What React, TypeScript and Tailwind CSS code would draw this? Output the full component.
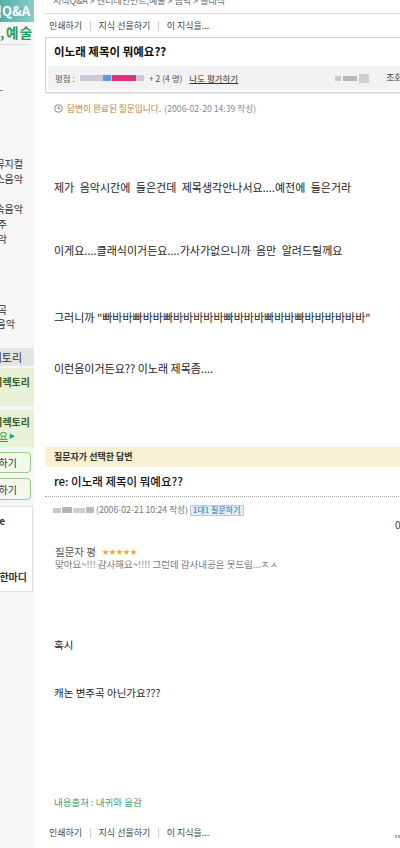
const Clock = () => (
  <svg width="9" height="9" viewBox="0 0 10 10" className="shrink-0">
    <circle cx="5" cy="5" r="4.2" fill="none" stroke="#8a7a6a" strokeWidth="1" />
    <path d="M5 2.4V5.2H7.2" fill="none" stroke="#8a7a6a" strokeWidth="1" />
  </svg>
);

function SideItem({ text, pr, cls = "" }: { text: string; pr: string; cls?: string }) {
  return (
    <div className={`h-[15px] leading-[15px] flex justify-end overflow-hidden whitespace-nowrap text-[10px] text-[#333] ${pr} ${cls}`}>
      {text}
    </div>
  );
}

function PrintLinks() {
  return (
    <>
      인쇄하기 <span className="mx-[7px] text-[#aaa]">|</span> 지식 선물하기 <span className="mx-[7px] text-[#aaa]">|</span> 이 지식을...
    </>
  );
}

export default function App() {
  return (
    <div className="w-[400px] h-[848px] overflow-hidden flex bg-white text-[#222] font-['Noto_Sans_CJK_KR',sans-serif]">
      {/* Sidebar */}
      <div className="w-[34px] shrink-0 h-full bg-[#f6f6f6] flex flex-col">
        <div className="h-[22px] bg-gradient-to-r from-[#55aea9] to-[#8ccbc6] flex items-center justify-end overflow-hidden whitespace-nowrap text-white text-[13px] font-bold pr-[4px]">
          지식Q&amp;A
        </div>
        <div className="h-[20px] flex items-center overflow-visible whitespace-nowrap text-[13.5px] font-bold text-[#279a57] tracking-[1.5px]">
          ,예술
        </div>
        <div className="mt-[2px] mr-[6px] border-t border-[#dcdcdc]" />
        <div className="mt-[36px] h-[15px] leading-[15px] flex justify-end overflow-hidden whitespace-nowrap text-[10px] text-[#444] pr-[31px]">
          -
        </div>
        <div className="mt-[60px]">
          <SideItem text="뮤지컬" pr="pr-[11px]" />
          <SideItem text="재즈,블루스음악" pr="pr-[11px]" />
        </div>
        <div className="mt-[15px]">
          <SideItem text="전통,민속음악" pr="pr-[11px]" />
          <SideItem text="악기연주" pr="pr-[27px]" />
          <SideItem text="국악" pr="pr-[27px]" />
        </div>
        <div className="mt-[57px]">
          <SideItem text="편곡,작곡" pr="pr-[27px]" cls="!h-[14px] !leading-[14px]" />
          <SideItem text="기타음악" pr="pr-[19px]" cls="!h-[14px] !leading-[14px]" />
        </div>
        <div className="mt-[17px] h-[18px] bg-[#e3e3e3] flex items-center justify-end overflow-hidden whitespace-nowrap text-[11px] text-[#333] pr-[12px]">
          디렉토리
        </div>
        <div className="mt-[2px] h-[38px] bg-[#e6f1d6] pt-[7px]">
          <div className="h-[14px] leading-[14px] flex justify-end overflow-hidden whitespace-nowrap text-[10px] font-bold text-[#3b5a22] pr-[4px]">
            오픈디렉토리
          </div>
        </div>
        <div className="mt-[4px] h-[37px] bg-[#e6f1d6] pt-[5px]">
          <div className="h-[14px] leading-[14px] flex justify-end overflow-hidden whitespace-nowrap text-[10px] font-bold text-[#3b5a22] pr-[4px]">
            오픈디렉토리
          </div>
          <div className="h-[14px] leading-[14px] flex justify-end overflow-hidden whitespace-nowrap text-[10px] text-[#23a05a] pr-[19px]">
            <span className="underline">바로가기요</span>
            <span className="text-[6px] ml-[1px]">▶</span>
          </div>
        </div>
        <div className="mt-[5px] h-[21px] ml-[-12px] w-[43px] rounded-[4px] border border-[#96c98a] bg-[#f3f9ec] flex items-center justify-end overflow-hidden whitespace-nowrap text-[10px] text-[#333] pr-[13px]">
          질문하기
        </div>
        <div className="mt-[5px] h-[22px] ml-[-12px] w-[43px] rounded-[4px] border border-[#96c98a] bg-[#f3f9ec] flex items-center justify-end overflow-hidden whitespace-nowrap text-[10px] text-[#333] pr-[13px]">
          답변하기
        </div>
        <div className="mt-[6px] h-[86px] bg-white border-r border-y border-[#e2e2e2] mr-[1px] flex flex-col">
          <div className="mt-[7px] h-[14px] leading-[14px] flex justify-end overflow-hidden whitespace-nowrap text-[10px] font-bold text-[#333] pr-[27px]">
            Hot 이슈 e
          </div>
          <div className="mt-[42px] h-[14px] leading-[14px] flex justify-end overflow-hidden whitespace-nowrap text-[10px] font-bold text-[#333] pr-[5px]">
            오늘의 한마디
          </div>
        </div>
      </div>

      {/* Main */}
      <div className="ml-[11px] w-[355px] shrink-0 flex flex-col">
        <div className="h-[14px] border-b border-[#dcdcdc] overflow-hidden">
          <div className="mt-[-5px] pl-[8px] text-[9px] leading-[12px] text-[#666] whitespace-nowrap">
            지식Q&amp;A &gt; 엔터테인먼트,예술 &gt; 음악 &gt; 클래식
          </div>
        </div>
        <div className="h-[23px] flex items-center pl-[4px] text-[9px] text-[#444] whitespace-nowrap">
          <PrintLinks />
        </div>
        <div className="h-[56px] w-[365px] shrink-0 border border-[#d2d2d2] shadow-[1px_1px_0_#ececec] flex flex-col">
          <div className="h-[28px] flex items-center pl-[8px] text-[11.5px] font-bold text-[#111] whitespace-nowrap">
            이노래 제목이 뭐예요??
          </div>
          <div className="mx-[2px] h-[24px] bg-[#f2f2f2] flex items-center whitespace-nowrap text-[8.5px] text-[#555]">
            <div className="w-[287px] shrink-0 flex items-center pl-[7px]">
              <span>평점 :</span>
              <div className="ml-[5px] flex h-[6px]">
                <div className="w-[23px] bg-[#c9c9d3]" />
                <div className="w-[8px] bg-[#5b9be6]" />
                <div className="w-[1px] bg-[#c9c9d3]" />
                <div className="w-[24px] bg-[#e0307c]" />
                <div className="w-[8px] bg-[#c9c9d3]" />
              </div>
              <span className="ml-[5px]">+ 2 (4 명)</span>
              <span className="ml-[7px] underline text-[#333]">나도 평가하기</span>
            </div>
            <div className="flex items-center gap-[2px] blur-[0.6px]">
              <div className="w-[6px] h-[5px] bg-[#c8c8c8]" />
              <div className="w-[14px] h-[5px] bg-[#b8b8b8]" />
              <div className="w-[10px] h-[9px] bg-[#d0d0d0]" />
            </div>
            <span className="ml-[17px] text-[9px] text-[#444]">조회수</span>
          </div>
        </div>

        <div className="mt-[10px] h-[11px] flex items-center pl-[9px] whitespace-nowrap text-[8.7px]">
          <Clock />
          <span className="ml-[4px] text-[#c47b45]">답변이 완료된 질문입니다.</span>
          <span className="ml-[3px] text-[#8a8a8a]">(2006-02-20 14:39 작성)</span>
        </div>

        <div className="pl-[9px] text-[11px] leading-[14px] text-[#222] whitespace-nowrap">
          <p className="mt-[66px] [word-spacing:3px]">제가 음악시간에 들은건데 제목생각안나서요....예전에 들은거라</p>
          <p className="mt-[49px] [word-spacing:3px]">이게요....클래식이거든요....가사가없으니까 음만 알려드릴께요</p>
          <p className="mt-[53px]">그러니까 "빠바바빠바바빠바바바바바빠바바바빠바바빠바바바바바바"</p>
          <p className="mt-[37px]">이런음이거든요?? 이노래 제목좀....</p>
        </div>

        <div className="mt-[72px] h-[20px] w-[370px] shrink-0 bg-[#f8f1d3] flex items-center pl-[9px] text-[9px] font-bold text-[#333] whitespace-nowrap">
          질문자가 선택한 답변
        </div>
        <div className="mt-[7px] h-[16px] flex items-center pl-[9px] text-[11.5px] font-medium text-[#111] whitespace-nowrap">
          re: 이노래 제목이 뭐예요??
        </div>
        <div className="mt-[6px] w-[370px] shrink-0 border-t border-dotted border-[#a8a8a8]" />
        <div className="mt-[6px] h-[14px] flex items-center pl-[8px] whitespace-nowrap text-[8.7px] text-[#777]">
          <div className="w-[42px] flex items-center gap-[1px] blur-[0.6px]">
            <div className="w-[8px] h-[5px] bg-[#c8c8c8]" />
            <div className="w-[10px] h-[6px] bg-[#b5b5b5]" />
            <div className="w-[12px] h-[5px] bg-[#cfcfcf]" />
            <div className="w-[8px] h-[6px] bg-[#bdbdbd]" />
          </div>
          <span className="ml-[1px]">(2006-02-21 10:24 작성)</span>
          <span className="ml-[2px] h-[11px] px-[2px] flex items-center bg-[#e0eef8] border border-[#a9cde3] text-[#3a6c98] text-[8px]">
            1대1 질문하기
          </span>
        </div>
        <div className="mt-[2px] h-[12px] leading-[12px] pl-[350px] text-[10px] text-[#444] whitespace-nowrap">0</div>

        <div className="mt-[14px] h-[13px] flex items-center pl-[10px] whitespace-nowrap text-[10.5px] text-[#555]">
          질문자 평
          <span className="ml-[6px] text-[7px] text-[#f4a81d]">★★★★★</span>
        </div>
        <div className="h-[13px] flex items-center pl-[10px] whitespace-nowrap text-[9.5px] text-[#7a7a7a]">
          맞아요~!!! 감사해요~!!!! 그런데 감사내공은 못드림...ㅈㅅ
        </div>

        <div className="pl-[9px] text-[10.5px] leading-[14px] text-[#222] whitespace-nowrap">
          <p className="mt-[67px]">혹시</p>
          <p className="mt-[34px]">캐논 변주곡 아닌가요???</p>
        </div>

        <div className="mt-[95px] h-[14px] flex items-center pl-[9px] text-[9.5px] text-[#3f9c6d] whitespace-nowrap">
          내용출처 : 내귀와 음감
        </div>
        <div className="mt-[17px] h-[14px] flex items-center whitespace-nowrap">
          <div className="w-[350px] shrink-0 flex items-center pl-[4px] text-[9px] text-[#444]">
            <PrintLinks />
          </div>
          <div className="mt-[6px] flex gap-[1px] blur-[0.5px]">
            <div className="w-[2px] h-[3px] bg-[#aaa]" />
            <div className="w-[2px] h-[3px] bg-[#aaa]" />
            <div className="w-[2px] h-[3px] bg-[#aaa]" />
          </div>
        </div>
      </div>
    </div>
  );
}
